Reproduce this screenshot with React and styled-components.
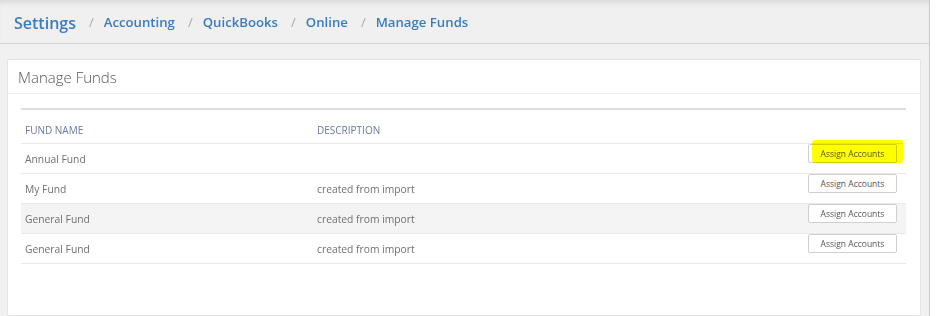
import React from "react";
import styled, { createGlobalStyle } from "styled-components";

const GlobalStyle = createGlobalStyle`
  html, body {
    margin: 0;
    padding: 0;
    background: #ffffff;
    font-family: "Open Sans", "Liberation Sans", sans-serif;
  }
`;

const Screen = styled.div`
  display: flex;
  width: 936px;
  height: 316px;
  overflow: hidden;
`;

const Main = styled.div`
  width: 929px;
  background: #f1f1f1;
  border-right: 1px solid #c9c9c9;
  display: flex;
  flex-direction: column;
`;

const Header = styled.div`
  height: 44px;
  box-sizing: border-box;
  display: flex;
  align-items: center;
  padding: 2px 0 0 14px;
  border-bottom: 1px solid #d4d4d4;
  box-shadow: inset 0 6px 6px -4px rgba(0, 0, 0, 0.12);
  background: #f0f0f0;
`;

const Crumb = styled.span`
  font-size: ${(p) => (p.$root ? "16px" : "13.2px")};
  font-weight: 600;
  color: #3b7cc0;
  line-height: 1;
`;

const Sep = styled.span`
  font-size: 13px;
  color: #a9a9a9;
  margin: 0 10px 0 13px;
  line-height: 1;
`;

const Card = styled.div`
  margin: 15px 8px 0 7px;
  background: #ffffff;
  border: 1px solid #e4e4e4;
  border-radius: 2px;
  flex: 1;
`;

const CardHeader = styled.div`
  height: 33px;
  display: flex;
  align-items: center;
  padding-left: 10px;
  border-bottom: 1px solid #ececec;
  font-size: 15px;
  font-weight: 300;
  color: #555;
`;

const CardBody = styled.div`
  padding: 14px 14px 0 13px;
`;

const Table = styled.div`
  border-top: 2px solid #dedede;
`;

const Row = styled.div`
  display: grid;
  grid-template-columns: 292px 1fr 100px;
  height: ${(p) => (p.$head ? "33px" : "29px")};
  border-bottom: 1px solid #e9e9e9;
  background: ${(p) => (p.$shade ? "#f4f4f4" : "transparent")};
`;

const Cell = styled.div`
  padding: 0 4px;
  display: flex;
  align-items: ${(p) => (p.$head ? "flex-end" : "center")};
  padding-bottom: ${(p) => (p.$head ? "6px" : "0")};
  font-size: ${(p) => (p.$head ? "10px" : "10.3px")};
  color: ${(p) => (p.$head ? "#6b7896" : "#707070")};
  text-transform: ${(p) => (p.$head ? "uppercase" : "none")};
`;

const ActionCell = styled.div`
  display: flex;
  justify-content: flex-end;
  align-items: flex-start;
  padding: 0 9px 0 0;
`;

const ButtonWrap = styled.div`
  position: relative;
  display: flex;
`;

const Button = styled.button`
  display: block;
  width: 89px;
  height: 19px;
  padding: 0;
  background: #ffffff;
  border: 1px solid #cfcfcf;
  border-radius: 2px;
  font-family: "Open Sans", "Liberation Sans", sans-serif;
  font-size: 8.5px;
  color: #555;
`;

const Highlight = styled.span`
  position: absolute;
  left: 4px;
  top: -4px;
  width: 91px;
  height: 23px;
  background: #ffff00;
  border-radius: 3px;
  mix-blend-mode: multiply;
  pointer-events: none;
`;

const funds = [
  { name: "Annual Fund", description: "", highlight: true },
  { name: "My Fund", description: "created from import" },
  { name: "General Fund", description: "created from import", shade: true },
  { name: "General Fund", description: "created from import" },
];

export default function App() {
  const crumbs = ["Accounting", "QuickBooks", "Online", "Manage Funds"];
  return (
    <Screen>
      <GlobalStyle />
      <Main>
        <Header>
          <Crumb $root>Settings</Crumb>
          {crumbs.map((c) => (
            <React.Fragment key={c}>
              <Sep>/</Sep>
              <Crumb>{c}</Crumb>
            </React.Fragment>
          ))}
        </Header>
        <Card>
          <CardHeader>Manage Funds</CardHeader>
          <CardBody>
            <Table>
              <Row $head>
                <Cell $head>Fund Name</Cell>
                <Cell $head>Description</Cell>
                <Cell $head />
              </Row>
              {funds.map((f, i) => (
                <Row key={i} $shade={f.shade}>
                  <Cell>{f.name}</Cell>
                  <Cell>{f.description}</Cell>
                  <ActionCell>
                    <ButtonWrap>
                      <Button>Assign Accounts</Button>
                      {f.highlight && <Highlight />}
                    </ButtonWrap>
                  </ActionCell>
                </Row>
              ))}
            </Table>
          </CardBody>
        </Card>
      </Main>
    </Screen>
  );
}
